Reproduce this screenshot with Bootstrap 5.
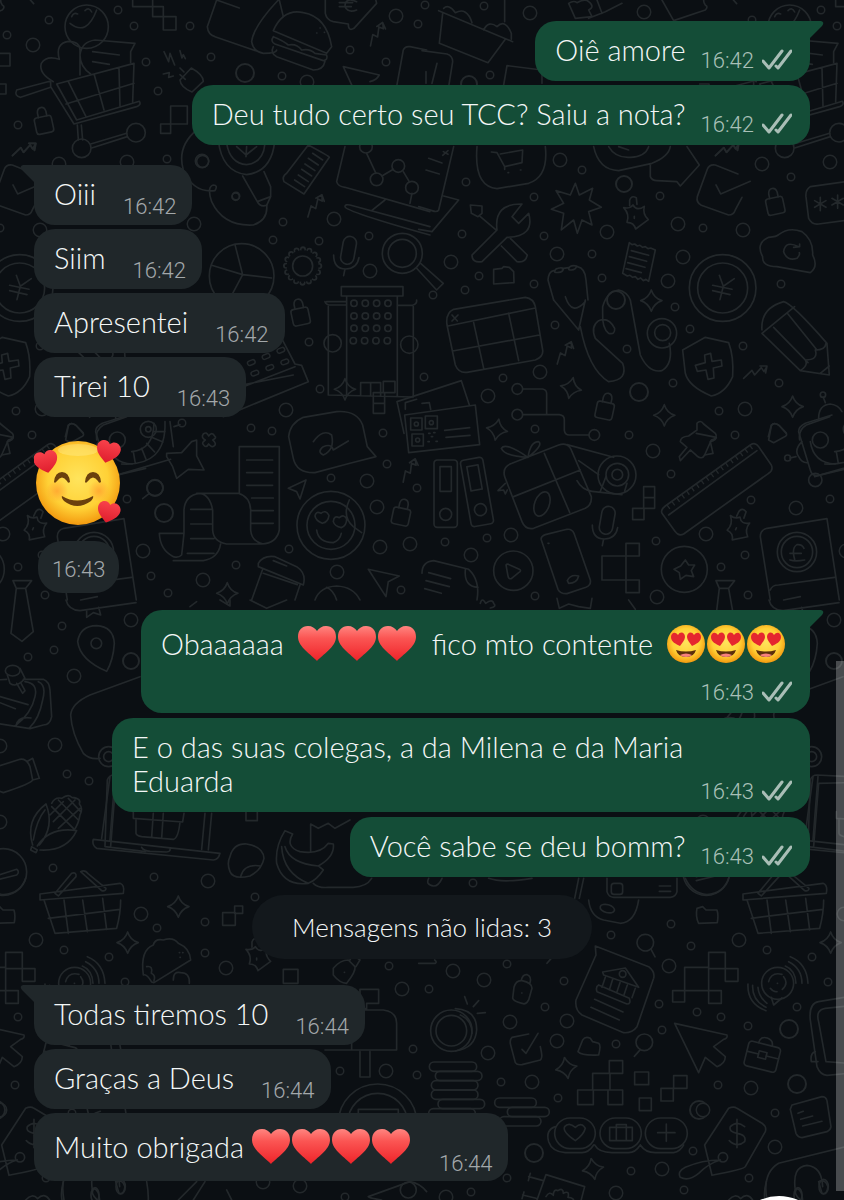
<!DOCTYPE html>
<html lang="pt-BR">
<head>
<meta charset="utf-8">
<meta name="viewport" content="width=device-width, initial-scale=1">
<title>Conversa</title>
<link href="https://cdn.jsdelivr.net/npm/bootstrap@5.3.0/dist/css/bootstrap.min.css" rel="stylesheet">
<style>
  :root { --wall: #0b0f13; --line: #23282b; --sent: #144d37; --received: #20272a; }
  body { background: var(--wall); color: #f4f7f7; font-family: Lato, "Open Sans", sans-serif; font-weight: 300; font-size: 29px; line-height: 34px; }
  .chat { overflow: hidden; padding: 21px 34px 19px; isolation: isolate; }
  .wallpaper { z-index: -1; fill: none; stroke: var(--line); stroke-width: 5; stroke-linecap: round; stroke-linejoin: round; }
  .wallpaper .cut { stroke: var(--wall); }
  .thread { gap: 4px; }
  .thread-wide { gap: 5px; }
  .bubble { position: relative; display: flex; border-radius: 21px; padding: 12px 18px 14px 20px; max-width: 100%; }
  .bubble time, .stamp { font-family: Roboto, "Open Sans", sans-serif; font-size: 22px; line-height: 24px; color: #a3a8aa; }
  .received { background: var(--received); gap: 27px; padding-right: 16px; }
  .sent { background: var(--sent); gap: 15px; }
  .meta { align-self: flex-end; display: flex; gap: 8px; margin-bottom: -6px; white-space: nowrap; }
  .received .meta { margin-bottom: -8px; }
  .sent time { color: #a9c0b7; }
  .ticks { width: 30px; height: 22px; fill: none; stroke: #a9beb6; stroke-width: 3; stroke-linecap: round; stroke-linejoin: round; }
  .sent.tail { border-top-right-radius: 0; }
  .received.tail { border-top-left-radius: 0; }
  .tail::after { content: ""; position: absolute; top: 0; width: 14px; height: 18px; background: inherit; clip-path: path("M0 0H11Q15 1 12 5L0 17Z"); }
  .sent.tail::after { left: 100%; }
  .received.tail::after { right: 100%; transform: scaleX(-1); }
  .bubble.stacked { flex-direction: column; gap: 18px; padding-top: 15px; width: 669px; }
  .stacked .emoji-line { padding-right: 5px; }
  .bubble.narrow { max-width: 698px; gap: 8px; }
  .bubble.hearts { padding-top: 15px; padding-bottom: 15px; }
  .hearts .meta { margin-bottom: -10px; }
  .emoji { width: 38px; height: 38px; margin-right: 2px; flex: none; }
  .sticker { width: 88px; height: 88px; }
  .stamp { background: var(--received); border-radius: 24px; padding: 17px 14px 11px; margin: 14px 0 0 4px; }
  .notice { background: #13181c; border-radius: 32px; padding: 16px 40px; margin: 18px 0 26px; font-size: 26px; line-height: 32px; }
  .gap-group { margin-top: 20px; }
  .gap-sticker { margin-top: 22px; }
  .gap-reply { margin-top: 17px; }
  .thumb { width: 8px; top: 661px; bottom: 9px; right: 0; background: #ffffff40; }
  .fab { width: 94px; height: 94px; border: 0; border-radius: 50%; background: #fff; right: 18px; top: calc(100% - 4px); }
</style>
</head>
<body>
<main class="chat position-relative min-vh-100 d-flex flex-column">
<svg class="wallpaper position-absolute top-0 start-0 w-100 h-100" aria-hidden="true">
  <defs>
    <path id="spark" d="M0-32Q8-7 32 0Q8 8 0 32Q-8 8-32 0Q-8-8 0-32Z"/>
    <g id="lock"><rect x="-26" y="-15" width="52" height="50" rx="8"/><path d="M-12-15v-14q2-14 13-14t13 14v14"/></g>
    <g id="clip"><path d="M-32-22q18 4 28-8q12 20 34 4q-6 24 12 40l-38 28q-5-20-26-20q9-24-10-44Z"/><path d="M-14-28v-16q4-16 20-8l2 20M0 4v6"/></g>
    <path id="zig" d="M-35 18L-10-6L-2 8L18-14L26-2L35-18M14-19l21 0l-4 21"/>
    <g id="coin"><circle r="100"/><circle r="75"/><path d="M-10-38L2-5L35-28M2-5L-8 35M-30-8l58 12M-30 8l52 12"/></g>
    <g id="lens"><circle r="25"/><path d="M-12 22l-18 20"/></g>
    <g id="mic"><rect x="-20" y="-46" width="40" height="84" rx="20" transform="rotate(10)"/><path d="M-44 10q0 42 36 42q34 0 40-34M-10 52l-4 20"/></g>
    <path id="dots" d="M49 20h0M7 35h0M118 10h0M134 26h0M190 26h0M211 57h0M146 62h0M158 91h0M18 125h0M282 76h0M350 50h0M386 62h0M418 24h0M167 159h0M236 196h0M283 222h0M273 240h0M319 241h0M369 236h0M0 228h0M425 5h0M484 6h0M490 75h0M466 182h0M534 197h0M582 170h0M660 196h0M462 234h0M544 236h0M592 254h0M479 276h0M534 284h0M465 290h0M433 295h0M602 278h0M88 177h0M78 284h0M309 342h0M320 389h0M16 411h0M32 435h0M251 428h0M272 431h0M383 433h0M387 464h0M127 499h0M331 478h0M417 488h0M289 549h0M236 565h0M151 576h0M168 593h0M18 567h0M45 595h0M401 590h0M182 423h0M555 325h0M627 349h0M675 307h0M690 329h0M40 346h0M424 377h0M503 378h0M535 429h0M629 435h0M673 383h0M76 383h0M671 474h0M445 542h0M487 538h0M656 541h0M535 596h0M42 555h0M48 500h0M62 626h0M54 650h0M28 657h0M67 774h0M89 781h0M53 868h0M154 877h0M255 897h0M473 883h0M157 928h0M205 922h0M64 950h0M109 957h0M205 953h0M125 982h0M18 1017h0M15 1085h0M389 966h0M413 1049h0M340 1071h0M417 1075h0M345 1197h0M671 924h0M611 935h0M691 946h0M507 964h0M429 989h0M564 981h0M545 1007h0M659 1004h0M697 1012h0M45 1026h0M662 1030h0M616 1044h0M501 1082h0M558 1098h0M94 1007h0M72 1113h0M693 1151h0M631 1171h0M46 1178h0M507 1178h0M471 1192h0M684 1190h0"/>
    <path id="rings" d="M33 45h0M396 16h0M307 82h0M59 164h0M127 162h0M194 224h0M334 219h0M40 230h0M370 271h0M530 13h0M560 160h0M607 232h0M678 224h0M451 262h0M557 254h0M683 257h0M668 281h0M286 410h0M143 551h0M203 580h0M367 481h0M377 507h0M380 547h0M410 544h0M337 572h0M3 534h0M540 372h0M488 396h0M653 451h0M42 409h0M93 508h0M511 535h0M471 555h0M657 597h0M131 620h0M74 676h0M55 745h0M0 822h0M208 881h0M0 746h0M141 914h0M36 940h0M226 968h0M402 989h0M386 1071h0M300 1186h0M263 1182h0M0 1110h0M453 971h0M484 980h0M669 966h0M510 1022h0M567 1021h0M557 1041h0M488 1053h0M532 1082h0M48 1088h0M72 1147h0M662 1169h0M446 1197h0M616 1193h0M644 12h0M202 161h0"/>
    <path id="windows" d="M1062 910h0M1096 910h0M1130 910h0M1164 910h0M1062 948h0M1096 948h0M1130 948h0M1164 948h0M1062 985h0M1096 985h0M1130 985h0M1164 985h0M1060 1022h0M1094 1022h0M1128 1022h0M1162 1022h0"/>
    <path id="keys" d="M705 208L850 148M715 238L870 180"/>
    <g id="doodles">
      <!-- rings: round dots with a smaller dot of the wall colour on top -->
      <use href="#dots" stroke-width="9"/><use href="#dots" class="cut" stroke-width="6"/>
      <use href="#rings" stroke-width="15"/><use href="#rings" class="cut" stroke-width="12"/>
      <g stroke-width="2"><circle cx="245" cy="73" r="9"/><circle cx="469" cy="84" r="8"/><circle cx="624" cy="184" r="8"/><circle cx="616" cy="300" r="9"/><circle cx="155" cy="488" r="8"/><circle cx="164" cy="513" r="9"/><circle cx="639" cy="392" r="9"/><circle cx="131" cy="661" r="8"/><circle cx="86" cy="1029" r="9"/><circle cx="94" cy="1084" r="9"/><circle cx="699" cy="1110" r="9"/><circle cx="534" cy="1153" r="9"/></g>

      <g transform="scale(.3333)">
        <!-- cart, smiley, heart, flag -->
        <circle cx="260" cy="80" r="65"/><path d="M215 50q5-14 18-8M255 32q12-12 20 4M210 70q50 40 80-40"/>
        <path d="M160 245Q115 220 124 190Q140 165 178 178Q165 130 205 124Q240 125 240 150V225M272 222Q240 200 240 165Q245 125 285 120L405 130L392 155V188M278 155l80 10M278 185l50 8"/>
        <path d="M152 260L222 372L410 320Q425 314 418 304L230 360L170 252L402 190L398 306M50 270L152 243V262L62 292Q42 288 50 270ZM198 312L402 250M205 245L258 350M283 225L312 330M357 205L360 318M232 375L235 420M244 375L248 420M272 432L380 400M275 444L382 410"/>
        <circle cx="245" cy="445" r="28"/><circle cx="408" cy="398" r="28"/>
        <use href="#lock" transform="translate(130 365) rotate(-12)"/><use href="#zig" transform="translate(73 449)"/>
        <path d="M-10 160h40v38h-40M-10 252h28v30h-28M398-10v30h60v-30M458 20h32v30h-32zM490 50h38v40h-38zM512 318h50v54h-50zM482 372h30v28h-30z"/>
        <path d="M492 155l14 30 4-25 14 35M540 152l6 22 4-10 6 12M490 222l18-4-2 14 14-4M540 240l34-36q36 20 36 40l-34 32q-34-14-36-36ZM540 204l12 12M556 238l-16-14"/>
        <path d="M650 0L622 80Q624 104 645 110L790 160Q830 160 830 150M650 0L718 24M835 0Q760 80 755 125Q760 155 790 160M838 0L850 50"/>
        <path d="M820 92Q850 25 910 38Q980 50 995 140L980 160ZM820 110Q850 122 865 135Q890 130 905 150Q930 145 945 160L980 165Q985 180 970 182L825 132Q810 124 820 110M820 140Q810 160 830 170L940 210Q970 210 975 184M960 84h1M950 99h1M973 97h1"/>
        <path d="M976-10V40Q980 60 1000 65L1045 72Q1045 95 1062 85L1130 10L1125-10M1070 5Q1035-10 1035 20Q1045 40 1070 30M1018 8h40M1018 20h36"/>
        <use href="#zig" transform="translate(1130 103) rotate(-35)"/>
        <path d="M1030 200L1138 225Q1130 240 1110 245M1030 200L1060 265M1190 260L1210 150Q1215 138 1230 140L1280 150"/>
        <path d="M590 390Q530 440 550 510Q580 580 645 572Q655 555 640 555Q620 560 635 605Q670 680 760 675Q805 660 800 615"/><circle cx="608" cy="484" r="18"/><circle cx="707" cy="590" r="11"/>
        <path d="M655 420Q665 515 740 524Q815 515 824 425M680 430Q690 490 740 494Q790 488 795 430M738 470L740 440M738 465L710 440M738 465L770 440M728 528L772 605L812 590V560L792 515M772 605Q780 622 800 616L812 590"/>
        <path d="M925 435Q990 470 988 472L912 582L852 545Q845 530 860 520ZM884 540l30 20M895 525l30 20M905 508l30 20M915 492l30 20M925 475l30 20M938 460l30 20"/>
        <use href="#zig" transform="translate(945 618) rotate(-30)"/>
        <path d="M1035 440L1010 545Q1014 560 1035 562L1290 635M1035 620Q1035 612 1050 615L1290 680M1035 620Q1040 635 1290 705M1115 632L1155 600M1100 460L1128 520M1146 528L1180 508M1210 515L1228 545M1236 580L1230 610"/><circle cx="1098" cy="440" r="19"/><circle cx="1130" cy="538" r="19"/><circle cx="1195" cy="498" r="19"/><circle cx="1236" cy="563" r="19"/>
        <circle cx="725" cy="828" r="97"/><path d="M705 734L728 824L635 796M728 824L815 834M728 824L685 905"/>
        <!-- gear -->
        <circle cx="908" cy="798" r="50" stroke-width="18" stroke-dasharray="0 19.6"/><circle class="cut" cx="908" cy="798" r="49" stroke-width="9" stroke-dasharray="0 19.2"/><circle class="cut" cx="908" cy="798" r="43" stroke-width="9"/><circle cx="908" cy="798" r="30"/>
        <use href="#mic" x="1045" y="755"/><circle cx="1207" cy="760" r="60"/><circle cx="1207" cy="760" r="42"/><path d="M1250 805L1310 870L1330 850L1262 790"/>
        <!-- office building -->
        <path d="M1024 860h185v28h-185zM980 905h60M1040 888v300M1192 888v300M985 1185l255 6M985 920v265M1240 920v270M975 905q2 8 12 10h50M1250 900q2 12-12 16h-45M1082 1186v-38h60v40M1112 1148v40"/><circle cx="998" cy="1030" r="26"/><circle cx="1228" cy="1034" r="26"/>
        <use href="#windows" stroke-width="24"/><use href="#windows" class="cut" stroke-width="14"/>
      </g>

      <g transform="translate(422) scale(.3333)">
        <path d="M50 32L272 125M62 40L52 130L198 188L250 118M65 25Q80 10 100 38Q135 20 150 68M185 90Q200 60 225 80Q250 55 268 100V118M248 0v65M0 152L75 162Q92 168 92 185L80 260M45 190L30 250M12 215V250M245 255L255 197L360 210V250"/>
        <path d="M440 10Q455 0 465 8Q490-5 500 5Q520 20 500 30L510 50L460 55ZM500 55L550 35L600 10M525 0L540 40M720 0L755 62L850 30Q860 20 850 15Q840 0 850-5M930-5l14 16"/>
        <path d="M165 440Q155 560 225 566L320 550Q380 530 370 440M208 456L225 458L248 500L300 488L302 450L235 462M258 518h2M295 510h2M248 500v8"/>
        <path d="M95 440L50 630Q45 638 30 632L-10 620M65 588L110 600L30 695L-10 688M20 475l40 14M12 510l40 12M64 455l14 8M78 452l-16 14"/>
        <path d="M460 550L472 585L512 565L502 600L538 622L500 635L510 675L480 660L466 700L455 660L418 690L425 640L388 628L425 610L402 572L445 585Z"/>
        <use href="#clip" x="637" y="645"/>
        <path d="M515 440Q530 510 590 512L690 490Q740 470 745 440M560 440Q580 475 625 472Q670 470 680 440M590 440l30 10M685 495V530Q690 542 705 542L765 545L775 558L832 495L795 440"/>
        <use href="#zig" transform="translate(915 449)"/>
        <path d="M948 522L880 495Q862 492 856 508L826 590Q822 608 838 616L920 645Q935 645 940 630L960 592M882 555L896 582L985 544"/>
        <use href="#lock" transform="translate(1058 608) rotate(-12)"/>
        <path d="M1270 545L1165 560Q1150 570 1152 590L1160 655Q1170 675 1190 672L1280 660M1195 592v40M1178 602l34 20M1178 622l34-20M1247 585v40M1230 595l34 20M1230 615l34-20"/>
        <path d="M145 615L180 618L180 640L168 650L148 640ZM175 650L222 690M155 760L225 690Q215 610 300 612L270 650L290 670L320 640Q340 710 255 712L180 785Q150 790 150 765ZM238 738L285 785Q310 790 316 765L265 715"/>
        <path d="M215 808L240 805L245 800L262 802L275 815L276 848L215 852ZM395 900L378 840Q380 815 395 812M398 815q0-8 10-10q14-4 16 2q-2 10-14 10q-12 2-12-2M420 806l20-3M440 806q4-12 24-8q-2 12-16 12q-8 0-8-4M466 800Q490 805 492 840L498 900"/>
        <path d="M622 728l8 6 8-2 8 6 8-2 8 6 8-2 8 6 8-2 14 6-20 94-8-6-8 4-8-8-8 4-8-8-8 2-8-6-8 2-14-8ZM628 752l52 14M622 770l52 14M617 788l52 14M612 806l46 12"/>
        <use href="#coin" x="902" y="864"/>
        <path d="M1022 770Q1000 730 1040 712Q1065 710 1070 704Q1100 680 1140 695Q1175 720 1172 765Q1190 800 1165 818L1065 800Q1020 800 1022 770ZM1130 740Q1090 720 1085 755Q1095 785 1125 775Q1135 765 1132 758M1115 742l18-2v-8"/>
        <use href="#spark" x="688" y="902"/>
      </g>

      <g transform="translate(0 300) scale(.3333)">
        <use href="#lock" transform="translate(900 40) rotate(-12)"/>
        <path d="M845 115L885 192L905 196L925 245L670 350L700 310L680 280L885 200M690 262L880 225"/><use href="#keys" stroke-width="18" stroke-dasharray="10 38"/><use href="#keys" class="cut" stroke-width="9" stroke-dasharray="10 38"/>
        <use href="#spark" x="1035" y="268"/><path d="M1150 244h35v34h-35zM1120 278h34v32h-34zM1120 310h34v30h-34z"/>
        <path d="M1128 470L1050 490L945 518Q890 520 880 475L866 410Q870 370 910 352L1010 335Q1070 330 1088 375L1102 440ZM940 425Q970 385 995 405Q1005 450 970 465Q950 455 970 440Q995 430 1000 450L1045 423"/>
        <path d="M196 410L205 375Q215 365 230 378L250 400M290 420Q285 390 310 375L380 350M510 365L520 440M522 380l18-6"/><circle cx="445" cy="388" r="24"/><circle cx="352" cy="420" r="24"/><circle cx="445" cy="388" r="8"/>
        <path d="M365 492Q500 500 495 365M395 455Q460 450 462 370M400 455l6 35M425 445l14 35M440 430l24 26M455 412l34 14M460 395l35 0M335 530L512 478"/>
        <path d="M575 425L590 420V468L612 510L565 508L530 535L518 500L500 470V460L545 458ZM610 402q10-8 16 6q10-14 18 0q8 6-6 12q14 12 4 18q-6 6-16-6q-8 14-16 2q-6-6 6-14q-14-8-6-18"/>
        <circle cx="465" cy="563" r="24"/><path d="M448 580l-20 16"/>
        <!-- receipt -->
        <path d="M718 580V440H838V690Q830 730 785 732H680Q640 725 638 690V630Q630 585 600 580Q555 585 552 630V700Q548 740 545 765Q535 775 520 770Q480 750 478 700H550M590 580H715Q750 590 752 630V690Q755 725 790 732M520 782H610Q655 775 662 732M740 480h78M740 518h78M740 556h78M755 594h65M755 632h65M755 670h65M572 628h62M572 672h62M572 716h70M562 760h80"/>
        <circle cx="993" cy="676" r="102"/><circle cx="993" cy="676" r="72"/><path d="M950 690Q955 728 1000 728Q1020 720 1024 700M945 648q2-16 18-8q14-12 24 6q-2 20-20 24q-20-8-22-22M1000 665q2-20 18-12q14-12 22 4q0 20-16 26q-20-4-24-18M1048 600Q1025 650 1060 680L1085 698"/>
        <path d="M918 540L900 597L890 575L865 565Z"/><use href="#lock" transform="translate(1205 640) rotate(12)"/><use href="#zig" transform="translate(1228 512) rotate(-35)"/>
        <path d="M-20 400L40 412Q40 420 22 425L30 460L5 465"/>
        <path d="M775 790Q790 765 825 770L890 800Q920 820 910 855L775 800ZM788 808L755 900M900 855L885 900M790 820l102 34M820 782l40 16"/><use href="#spark" x="682" y="880"/>
        <path d="M1105 808L1198 828L1165 845L1158 890ZM945 900Q960 860 1010 858Q1060 860 1080 900M1010 900Q1000 870 980 862"/>
      </g>

      <g transform="translate(422 300) scale(.3333)">
        <path d="M75 75Q70 40 95 28L310-8Q335-5 340 20L362 150Q365 170 340 180L135 217Q110 220 100 195ZM78 78L340 24M92 153L352 105M155 68L185 205M260 40L290 182M90 45l16 18M108 45l-18 18"/>
        <use href="#zig" transform="translate(427 159) rotate(-30)"/><use href="#zig" transform="translate(1000 217)"/>
        <path d="M395 0L470 90L490 0M475 80Q500 210 560 245Q620 240 602 190L520 115Q505 80 530 62Q560 50 578 85Q580 105 560 100Q540 85 542 40V20Q555-25 590-30Q615-25 625 0L655 165Q680 220 720 212Q755 190 742 130M430-10Q450 50 490 5"/><circle cx="720" cy="100" r="44"/><circle cx="722" cy="98" r="24"/>
        <path d="M782 150L850 112L920 128Q936 170 932 230Q910 280 868 288Q800 260 790 220ZM848 165l18-5 4 24 28-4 2 18-26 6 2 30-18 4-6-28-26 4-6-18 30-8Z"/>
        <path d="M1020 90Q1015 25 1085 5Q1110 10 1215 130L1222 225L1135 212L1020 100L1118 20M1055 82L1158 188M1098 42L1185 150M1135 212Q1160 195 1150 180Q1190 180 1180 150Q1210 150 1212 130M1195 220L1222 198"/>
        <!-- tickets with codes -->
        <path d="M-52 345L160 315L173 434L-40 458ZM-75 305L118 242L142 315M-75 305L-54 400M10 348h36v38h-36zM-34 354h34v36h-34zM-30 402h34v36h-34zM68 391l75-8M72 412l72-6M20 400h4M35 398h4M28 410h4M18 425h4M42 424h4M0 310l22-2 4 20M-50 328v-20l34-10"/><circle cx="28" cy="368" r="6"/><circle cx="-17" cy="372" r="6"/><circle cx="-13" cy="420" r="6"/>
        <circle cx="286" cy="267" r="16"/><circle cx="286" cy="344" r="16"/><circle cx="517" cy="405" r="16"/><path d="M302 267h60q12 2 12 14v62M302 344h110q15 2 15 15v32q2 14 15 14h59"/>
        <use href="#spark" transform="translate(447 264) rotate(12)"/><use href="#spark" transform="translate(225 389) rotate(10)"/><use href="#spark" x="727" y="346"/><use href="#spark" x="1112" y="320"/><use href="#lock" transform="translate(550 322) rotate(12)"/>
        <!-- ring binders -->
        <rect x="36" y="480" width="70" height="202" rx="10"/><rect x="54" y="500" width="34" height="74"/><circle cx="71" cy="643" r="18"/><g transform="rotate(-10 165 576)"><rect x="131" y="475" width="68" height="202" rx="10"/><rect x="148" y="496" width="34" height="74"/><circle cx="166" cy="630" r="18"/></g>
        <!-- gift -->
        <path d="M248 530Q240 500 270 490L410 435Q440 425 450 455L508 590Q510 615 490 625L335 685Q310 690 300 665ZM275 590L475 510M367 460L443 637M318 472Q250 470 238 445Q250 425 318 472Q325 425 350 425Q365 435 318 472M435 434L575 472M470 482L530 524M465 542Q480 570 510 574L600 584M535 574L552 530M608 574L615 550"/><ellipse cx="360" cy="612" rx="22" ry="38" transform="rotate(20 360 612)"/><circle cx="585" cy="525" r="57"/><circle cx="586" cy="524" r="34"/><circle cx="586" cy="524" r="16"/>
        <path d="M250 550L228 572L245 570L250 582L256 570"/>
        <path d="M825 370Q835 358 845 372L880 400Q890 415 868 420L848 465Q840 480 825 468L805 450L775 482L772 470L795 442L775 425Q775 410 800 408L825 390Z"/>
        <path d="M985 435Q1000 425 1010 440L1048 495Q1055 510 1040 520L785 702Q770 710 760 695L720 640Q715 630 730 618ZM740 645L1005 452"/><path stroke-dasharray="4 14" stroke-width="14" stroke-linecap="butt" d="M738 622L990 440"/>
        <path d="M1040 420L1048 378Q1055 365 1070 375L1092 398Q1098 408 1085 412L1055 428ZM1130 395Q1130 380 1150 370L1230 345M1130 395L1165 510Q1170 530 1190 526L1280 505M1190 355Q1190 315 1225 312Q1250 315 1260 335M1210 308L1204 292M1140 425Q1115 450 1130 470Q1140 490 1158 488M1104 474L1122 470M1165 425Q1175 490 1240 492"/><circle cx="1203" cy="284" r="8"/><circle cx="1097" cy="474" r="9"/><circle cx="1180" cy="540" r="20"/>
        <use href="#mic" x="555" y="665"/><path d="M665 560h33v33h-33zM665 593h33v32h-33zM632 625h34v34h-34zM540 768h72v72h-72zM612 730h40v38h-40zM612 840h40v38h-40zM612 768v72"/>
        <circle cx="274" cy="812" r="59"/><path d="M252 795Q256 790 265 796L292 808Q300 812 290 818L268 836Q260 838 258 828ZM358 720Q355 710 370 704L435 688Q450 686 456 700L505 840Q508 855 492 862L435 881Q415 882 408 868ZM436 842Q445 822 470 828Q465 850 440 850ZM378 730h3"/>
        <circle cx="787" cy="808" r="69"/><path d="M790 780L800 795L818 795L808 812L815 830L792 826L775 838L772 818L756 808L776 798Z"/><use href="#clip" transform="translate(945 680) rotate(25)"/>
        <!-- passport book -->
        <path d="M1015 710Q1015 690 1035 685L1215 656L1252 900M1015 710L1045 900M1045 870Q1050 855 1070 855L1238 832M1085 900l50-10M1146 745Q1140 732 1125 734Q1108 744 1118 778M1104 760h34M1104 780Q1120 785 1148 780"/><circle cx="1125" cy="756" r="59"/><circle cx="1125" cy="756" r="47"/>
        <!-- tie -->
        <path d="M882 842h56L920 865L943 995L909 1024L876 1000L892 865ZM892 865h28"/>
        <path d="M0 820Q0 785 35 782L140 808Q175 840 165 900M130 808Q125 860 168 862M20 818l66 18M12 842l70 18M8 866l50 14"/>
      </g>

      <g transform="translate(0 600) scale(.3333)">
        <path d="M198 0Q205 30 240 32L408 8M260 30V52L280 38L302 45L296 22M570 20L590 5M660 0L690 18V0M750 0L800 25L860 0"/>
        <path d="M320 214Q240 180 233 125Q240 78 290 77Q340 80 343 130Q340 180 320 214Z"/><circle cx="289" cy="130" r="16"/>
        <path d="M-10 240L20 238M70 238L130 238Q148 245 150 270L155 350Q150 375 130 375L90 386L-10 370M75 245Q115 250 105 290Q95 340 45 378M115 245Q140 255 128 300Q118 355 88 384M0 290l84 24M0 308l46 18M48 378q5-30 45-24M50 250L68 280L75 272L62 248"/><ellipse cx="38" cy="212" rx="22" ry="16"/><path d="M22 225L30 250Q50 265 75 235L60 205"/>
        <path d="M420 230L270 285Q215 310 212 345Q215 400 250 460Q270 480 300 475"/><circle cx="326" cy="470" r="30"/><circle cx="326" cy="470" r="15"/>
        <path d="M-10 500L60 478Q80 475 90 500L98 540Q95 550 10 578L-10 570M80 485L98 475L118 535L98 540"/>
        <!-- corn -->
        <path d="M95 740L112 750L108 758L92 750ZM98 735Q75 660 138 612Q165 680 118 735M112 738Q150 680 230 692Q200 755 120 750M100 720Q110 660 135 630M155 610Q165 590 185 595Q205 580 215 592Q245 595 238 612Q250 625 240 645Q235 675 222 690M155 620L220 685M175 600L235 660M205 595L242 635M160 665L225 600M175 685L240 625M150 645L190 605"/>
        <circle cx="10" cy="816" r="70"/><path d="M-20 830L50 808Q60 815 50 825L-20 842M330 530L305 715M345 530L330 720M280 718L660 760Q655 780 640 780L290 745Q275 735 280 718ZM425 742Q430 752 450 754L500 756Q512 755 510 746M635 640L625 750M615 640L605 748M400 635V655L548 666L552 640M408 660V700Q410 708 425 710L520 718Q535 715 540 666M460 640L455 712M490 640L485 715M738 636v26h34v-26"/>
        <path d="M690 770Q700 730 740 732Q790 740 792 775Q785 810 750 828Q700 840 690 815Q680 790 690 770M722 830q10-40 60-32M855 692L878 702Q855 740 900 755Q960 765 985 730L1000 732Q1005 770 955 798L970 810Q950 840 925 850Q850 860 830 790Q825 740 855 692ZM855 740Q870 790 955 798M845 740Q850 820 925 850M932 755V672L955 685L985 670L1005 685L1050 660M940 850Q955 865 985 862H1060Q1100 860 1115 835"/>
        <path d="M165 880L215 820Q230 815 228 830L175 888ZM242 815Q255 808 265 822L318 865Q318 875 305 872ZM120 882L360 850Q375 855 370 880L120 900ZM132 900L165 1000L350 985Q362 940 362 900M145 955L360 928M192 900L205 1000M248 900L262 995M308 895L320 990"/>
        <use href="#spark" x="535" y="920"/><use href="#spark" x="383" y="1028"/>
      </g>

      <g transform="translate(422 600) scale(.3333)">
        <path d="M175 10q5-20 16 0q20-15 24 0q10 10-10 14M405-5L412 25L440 12L470 20L505 25L510-5M620 0L640 28"/>
        <path d="M1165 540Q1170 525 1185 525L1280 530M1175 740L1190 550L1280 548M1165 540L1158 740L1280 755"/>
        <path d="M20 835Q10 855 35 858Q50 858 60 835M470 835L458 895M485 835L472 895M555 835V875Q560 892 575 892H745Q762 890 765 875V835M712 858h34M712 874h34M790 835Q810 880 855 884Q905 880 920 835M200 835Q240 850 330 835"/><rect x="568" y="850" width="34" height="33" rx="8"/>
        <path d="M500 900Q505 950 545 960L595 970Q640 968 650 900"/><ellipse cx="556" cy="926" rx="22" ry="12" transform="rotate(15 556 926)"/>
      </g>

      <g transform="translate(0 900) scale(.3333)">
        <path d="M668 38h38v38h-38zM704 18h24v22h-24zM850 208h44v42h-44zM1080 268h56v42h-36v16h-20zM1075 330H1150Q1190 335 1190 370V450H975M1080 455v76h30v-76M1055 350V450"/>
        <path d="M455 246Q440 220 430 225Q420 150 460 135Q465 115 490 120Q520 110 535 130Q570 145 572 180L462 248ZM440 200q20-4 14 20q14 6 8 22M520 240q0-28 22-22q28 0 26 32M538 158h1M548 158h1M540 172h1"/>
        <use href="#clip" transform="translate(770 170)"/><path d="M1000 205Q1020 180 1045 180L1065 200Q1068 215 1040 250Q1020 250 1000 225ZM1050 180Q1055 160 1080 180L1068 200M1033 217h1"/>
        <circle cx="1133" cy="670" r="118"/><circle cx="1133" cy="670" r="90"/><path d="M1075 640v-12h120v12M1145 900Q1110 895 1105 890L1230 845Q1260 850 1280 875"/><circle cx="1225" cy="870" r="24"/>
        <path d="M190 845Q175 900 200 930M440 845Q450 900 440 930M535 900L590 845M580 900L615 845M680 870L695 900"/><ellipse cx="285" cy="885" rx="12" ry="22"/><ellipse cx="362" cy="860" rx="14" ry="22"/>
      </g>

      <g transform="translate(422 900) scale(.3333)">
        <path d="M825 25L842 20L852 30L885 30Q890 45 886 68L830 70Q820 50 825 25Z"/>
        <use href="#lens" transform="translate(670 128) rotate(-70)"/><use href="#lens" x="667" y="427"/>
        <path d="M-10 190h50q6-4-2-10M375 190l12-14M788 202h72v70h-72zM860 157h50v49h-50zM910 206h38v38h-38zM752 272h36v34h-36zM860 272h38v38h-38zM860 206v66"/>
        <path d="M276 262Q282 240 300 242Q330 248 330 265L320 300Q312 316 300 310Q275 305 272 295ZM298 240q4-18 18-16q14 6 8 25M299 279h1"/>
        <path d="M520 138L680 200Q700 215 695 235L645 380Q630 400 605 398L480 345Q458 330 462 300L522 165ZM542 216L610 204L650 262L545 225ZM530 255L622 295Q628 312 615 312L525 275Q520 260 530 255M550 232l-10 30M572 238l-10 32M594 248l-10 30M616 255l-10 30M640 265l-10 28M518 298l85 38M507 322l85 38"/><circle cx="602" cy="222" r="10"/>
        <circle cx="1067" cy="250" r="48"/><path d="M1048 292L1055 315L1080 294M1040 245q8-30 40-22M1085 230q16 20-4 38M1045 265q10 12 20 10M1066 250h1M1090 198Q1120 210 1122 250M1105 170Q1155 190 1158 250M1100 185Q1140 205 1140 250M1008 262Q1010 290 1035 310M992 256Q990 300 1032 322M978 252Q975 310 1032 332"/>
        <circle cx="88" cy="392" r="62"/><circle cx="88" cy="392" r="46"/><path d="M100 326Q165 330 164 390Q160 445 100 453M115 345Q150 360 150 400M128 290l8 22M170 302l-16 18M190 338l-24 2"/>
        <path d="M320 402L270 412Q262 420 266 435L280 488Q285 496 300 494L355 480Q362 475 358 455L355 440M300 448L312 460L348 400"/>
        <path d="M482 420Q490 408 505 415L512 425L530 430Q538 435 530 465Q480 468 468 455Z"/><use href="#spark" transform="translate(433 504) rotate(-10)"/>
        <path d="M758 370L915 405Q918 415 905 418L875 440L910 470Q910 490 885 500L850 472L830 518Z"/>
        <g transform="rotate(14 1020 470)"><rect x="972" y="432" width="98" height="76" rx="10"/><path d="M1000 432q2-22 22-20t20 20M972 465h36M1032 465h38"/><rect x="1008" y="455" width="24" height="20"/></g>
        <path d="M1165 360Q1160 310 1190 305L1280 290M1165 360L1185 500Q1195 525 1215 526L1280 520M1190 365Q1180 330 1210 325L1280 318M1190 365L1212 485L1280 490M1180 455q-16 5-12 30h20"/>
        <path d="M512 520h52v50h-52zM562 482h40v38h-40zM467 570h47v44h-47zM558 570h44v44h-44zM638 516h42v38h-42zM652 594h36v38h-36zM717 565h37v38h-37zM755 527h40v38h-40z"/>
        <rect x="22" y="486" width="142" height="28" rx="14"/><rect x="40" y="514" width="140" height="28" rx="14"/><rect x="28" y="542" width="140" height="28" rx="14"/><rect x="28" y="570" width="140" height="28" rx="14"/><rect x="48" y="598" width="140" height="28" rx="14"/><rect x="20" y="626" width="140" height="28" rx="14"/><rect x="218" y="594" width="125" height="28" rx="14"/><rect x="256" y="622" width="126" height="28" rx="14"/><rect x="232" y="650" width="125" height="28" rx="14"/>
        <rect x="398" y="654" width="122" height="92" rx="46"/><rect x="534" y="654" width="124" height="92" rx="46"/><rect x="670" y="654" width="126" height="92" rx="46"/><path d="M400 680Q370 690 380 725Q390 755 430 758H480Q500 758 515 735M518 735Q530 758 570 758H620Q640 758 655 735M655 735Q670 758 700 758H755Q775 755 785 735M460 722Q420 695 428 680Q440 665 460 682Q480 665 490 685Q485 705 460 722M563 682h68v40h-68zM583 722v-48h30v48M733 672v52M707 698h52"/>
        <path d="M920 625Q935 618 945 625L1020 670Q1035 680 1030 695L970 800Q965 808 870 826L848 735ZM968 680Q945 660 925 680Q920 695 945 700Q975 705 968 725Q945 745 922 722M945 658v85M895 780Q840 780 790 802Q765 815 775 832Q800 845 830 820Q860 790 895 780"/><circle cx="903" cy="772" r="14"/>
        <path d="M1110 615L1200 590Q1212 590 1215 602L1227 680Q1226 690 1215 695L1140 713Q1128 712 1122 700L1105 628ZM1128 640l16-6M1136 658l36-10M1142 678l58-14"/>
        <use href="#spark" transform="translate(513 807) rotate(-10)"/><path d="M372 824L488 860L475 910M372 824L345 900M320 830l44 12M325 820l-6 22M302 885l40 10M306 876l-6 20M372 890q10-18 22-4q0-20 14-14q16-10 16 8q20-10 14 12q20 0 18 18"/>
        <path d="M1035 900Q1020 820 1070 790L1280 738M1120 870Q1110 800 1155 796Q1200 800 1202 860M1135 900Q1112 880 1125 866Q1140 870 1142 900M1190 845Q1210 835 1218 860Q1215 885 1200 880ZM920 900q20-22 36-4q20-20 36 4"/>
      </g>
    </g>

    <radialGradient id="skin" cx=".5" cy=".45" r=".55"><stop offset="0" stop-color="#ffe45c"/><stop offset=".65" stop-color="#ffd136"/><stop offset="1" stop-color="#f3990f"/></radialGradient>
    <linearGradient id="love" x1="0" y1="0" x2="0" y2="1"><stop offset="0" stop-color="#ff8580"/><stop offset=".35" stop-color="#fb5553"/><stop offset="1" stop-color="#ee2329"/></linearGradient>
    <linearGradient id="ruby" x1="0" y1="0" x2="0" y2="1"><stop offset="0" stop-color="#f8424b"/><stop offset="1" stop-color="#df1d2d"/></linearGradient>
    <symbol id="heart" viewBox="0 0 38 38"><path fill="url(#love)" d="M19 36C14 30 0 22 0 12C0 5 4 1 10 1C14 1 17 3 19 6C21 3 24 1 28 1C34 1 38 5 38 12C38 22 24 30 19 36Z"/></symbol>
    <symbol id="hearteyes" viewBox="0 0 38 38"><circle cx="19" cy="19" r="19" fill="url(#skin)"/><path fill="#e5262f" d="M13 21C9 19 4 17 4 12C4 8 8 6 11 10C13 6 18 7 18 12C18 15 15 18 13 21ZM25 21C29 19 34 17 34 12C34 8 30 6 27 10C25 6 20 7 20 12C20 15 23 18 25 21Z"/><path fill="#5b2e0b" d="M9 25Q19 28 29 25Q27 32 19 32Q11 32 9 25Z"/><path fill="#f6817c" d="M13 30Q19 27 25 30Q23 32 19 32Q15 32 13 30Z"/></symbol>
  </defs>
  <use href="#doodles"/>
  <use href="#doodles" x="703"/>
  <use href="#doodles" x="-703"/>
</svg>

<section class="thread d-flex flex-column align-items-end">
  <div class="bubble sent tail"><span>Oiê amore</span><span class="meta"><time>16:42</time><svg class="ticks" viewBox="0 0 30 22" role="img" aria-label="Entregue"><path d="M1 12l6 7L20 2M14 17l2 2L29 2"/></svg></span></div>
  <div class="bubble sent"><span>Deu tudo certo seu TCC? Saiu a nota?</span><span class="meta"><time>16:42</time><svg class="ticks" viewBox="0 0 30 22" role="img" aria-label="Entregue"><path d="M1 12l6 7L20 2M14 17l2 2L29 2"/></svg></span></div>
</section>

<section class="thread gap-group d-flex flex-column align-items-start">
  <div class="bubble received tail"><span>Oiii</span><span class="meta"><time>16:42</time></span></div>
  <div class="bubble received"><span>Siim</span><span class="meta"><time>16:42</time></span></div>
  <div class="bubble received"><span>Apresentei</span><span class="meta"><time>16:42</time></span></div>
  <div class="bubble received"><span>Tirei 10</span><span class="meta"><time>16:43</time></span></div>
</section>

<section class="gap-sticker d-flex flex-column align-items-start">
  <svg class="sticker" viewBox="0 0 88 88" role="img" aria-label="Rosto sorridente com corações">
    <defs><radialGradient id="blush"><stop offset="0" stop-color="#ff9a2e" stop-opacity=".7"/><stop offset="1" stop-color="#ff9a2e" stop-opacity="0"/></radialGradient><path id="mini" fill="url(#ruby)" d="M12 23C7 19 0 15 0 8C0 2 8-2 12 4C16-2 24 2 24 8C24 15 17 19 12 23Z"/></defs>
    <circle cx="44" cy="44" r="42" fill="url(#skin)"/><ellipse cx="44" cy="11" rx="20" ry="6" fill="#fff3a0" opacity=".35"/>
    <circle cx="23" cy="52" r="11" fill="url(#blush)"/><circle cx="65" cy="52" r="11" fill="url(#blush)"/>
    <path fill="#6b400d" d="M20 43Q21 33 28 33Q35 33 36 43Q34 45 33 42Q28 35 23 42Q21 45 20 43ZM51 43Q52 33 59 33Q66 33 67 43Q65 45 64 42Q59 35 54 42Q52 45 51 43Z"/>
    <path fill="#6b400d" d="M28 57Q43 66 59 57Q60 59 57 62Q43 72 30 62Q27 59 28 57Z"/>
    <use href="#mini" transform="translate(0 11) rotate(-12 12 12)"/><use href="#mini" transform="translate(62 1) rotate(14 12 12)"/><use href="#mini" transform="translate(63 62) scale(.95) rotate(14 12 12)"/>
  </svg>
  <time class="stamp">16:43</time>
</section>

<section class="thread-wide gap-reply d-flex flex-column align-items-end">
  <div class="bubble sent tail stacked"><span class="emoji-line d-flex flex-wrap align-items-center justify-content-between"><span>Obaaaaaa</span><span class="d-flex"><svg class="emoji" role="img" aria-label="❤️"><use href="#heart"/></svg><svg class="emoji" role="img" aria-label="❤️"><use href="#heart"/></svg><svg class="emoji" role="img" aria-label="❤️"><use href="#heart"/></svg></span><span>fico mto contente</span><span class="d-flex"><svg class="emoji" role="img" aria-label="😍"><use href="#hearteyes"/></svg><svg class="emoji" role="img" aria-label="😍"><use href="#hearteyes"/></svg><svg class="emoji" role="img" aria-label="😍"><use href="#hearteyes"/></svg></span></span><span class="meta"><time>16:43</time><svg class="ticks" viewBox="0 0 30 22" role="img" aria-label="Entregue"><path d="M1 12l6 7L20 2M14 17l2 2L29 2"/></svg></span></div>
  <div class="bubble sent narrow"><span>E o das suas colegas, a da Milena e da Maria Eduarda</span><span class="meta"><time>16:43</time><svg class="ticks" viewBox="0 0 30 22" role="img" aria-label="Entregue"><path d="M1 12l6 7L20 2M14 17l2 2L29 2"/></svg></span></div>
  <div class="bubble sent"><span>Você sabe se deu bomm?</span><span class="meta"><time>16:43</time><svg class="ticks" viewBox="0 0 30 22" role="img" aria-label="Entregue"><path d="M1 12l6 7L20 2M14 17l2 2L29 2"/></svg></span></div>
</section>

<div class="notice align-self-center">Mensagens não lidas: 3</div>

<section class="thread d-flex flex-column align-items-start">
  <div class="bubble received tail"><span>Todas tiremos 10</span><span class="meta"><time>16:44</time></span></div>
  <div class="bubble received"><span>Graças a Deus</span><span class="meta"><time>16:44</time></span></div>
  <div class="bubble received hearts"><span class="d-flex align-items-center">Muito obrigada&nbsp;<svg class="emoji" role="img" aria-label="❤️"><use href="#heart"/></svg><svg class="emoji" role="img" aria-label="❤️"><use href="#heart"/></svg><svg class="emoji" role="img" aria-label="❤️"><use href="#heart"/></svg><svg class="emoji" role="img" aria-label="❤️"><use href="#heart"/></svg></span><span class="meta"><time>16:44</time></span></div>
</section>

<div class="thumb position-absolute"></div>
<button class="fab position-absolute" type="button" aria-label="Ir para o fim"></button>
</main>
<script src="https://cdn.jsdelivr.net/npm/bootstrap@5.3.0/dist/js/bootstrap.bundle.min.js"></script>
</body>
</html>
